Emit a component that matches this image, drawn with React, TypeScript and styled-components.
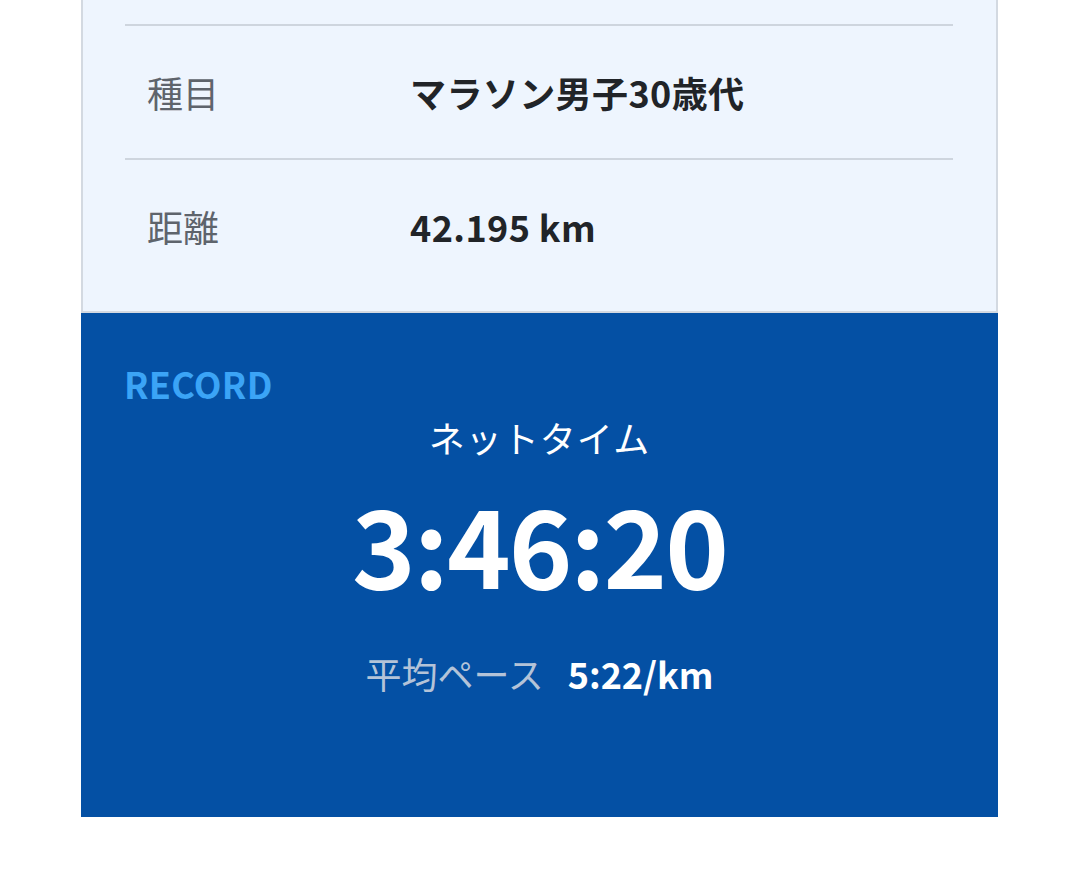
import React from "react";
import styled, { createGlobalStyle } from "styled-components";

interface DetailRowProps {
    label: string;
    value: string;
}

const GlobalStyle = createGlobalStyle`
    html, body {
        margin: 0;
        padding: 0;
        background: #ffffff;
    }
    body {
        font-family: "Noto Sans CJK JP", "Noto Sans", sans-serif;
        -webkit-font-smoothing: antialiased;
    }
`;

const Card = styled.div`
    width: 917px;
    margin: 0 82px 0 81px;
    height: 817px;
    display: flex;
    flex-direction: column;
`;

const DetailPanel = styled.div`
    background: #eef5fe;
    border-left: 2px solid #d3d9e1;
    border-right: 2px solid #d3d9e1;
    border-bottom: 2px solid #d3d9e1;
    padding: 24px 43px 19px 42px;
`;

const Row = styled.div`
    display: grid;
    grid-template-columns: 263px 1fr;
    align-items: center;
    height: 132px;
    padding: 0 22px;
    border-top: 2px solid #ced5de;
`;

const Label = styled.span`
    font-size: 36px;
    line-height: 1.5;
    color: #5e646c;
`;

const Value = styled.span`
    font-size: 36px;
    line-height: 1.5;
    font-weight: 700;
    color: #212428;
    letter-spacing: 0.4px;
`;

const RecordPanel = styled.div`
    flex: 1;
    background: #0450a4;
    padding: 43px 43px 0;
    display: flex;
    flex-direction: column;
`;

const SectionTitle = styled.div`
    font-size: 36px;
    line-height: 54px;
    font-weight: 700;
    color: #3ba4f6;
    letter-spacing: 0.3px;
`;

const TimeLabel = styled.div`
    text-align: center;
    font-size: 36px;
    line-height: 54px;
    color: #ffffff;
    letter-spacing: 1px;
`;

const TimeValue = styled.div`
    margin-top: 12px;
    text-align: center;
    font-size: 108px;
    line-height: 132px;
    font-weight: 700;
    color: #ffffff;
    letter-spacing: -2px;
`;

const PaceLine = styled.div`
    margin-top: 38px;
    display: flex;
    justify-content: center;
    align-items: baseline;
    gap: 24px;
    line-height: 54px;
`;

const PaceLabel = styled.span`
    font-size: 36px;
    color: #b4c3d8;
`;

const PaceValue = styled.span`
    font-size: 36px;
    font-weight: 700;
    color: #ffffff;
`;

const DetailRow = (props: DetailRowProps): JSX.Element => {
    return (
        <Row>
            <Label>{props.label}</Label>
            <Value>{props.value}</Value>
        </Row>
    );
};

const App = (): JSX.Element => {
    return (
        <>
            <GlobalStyle />
            <Card>
                <DetailPanel>
                    <DetailRow label={"種目"} value={"マラソン男子30歳代"} />
                    <DetailRow label={"距離"} value={"42.195 km"} />
                </DetailPanel>
                <RecordPanel>
                    <SectionTitle>RECORD</SectionTitle>
                    <TimeLabel>ネットタイム</TimeLabel>
                    <TimeValue>3:46:20</TimeValue>
                    <PaceLine>
                        <PaceLabel>平均ペース</PaceLabel>
                        <PaceValue>5:22/km</PaceValue>
                    </PaceLine>
                </RecordPanel>
            </Card>
        </>
    );
};

export default App;
